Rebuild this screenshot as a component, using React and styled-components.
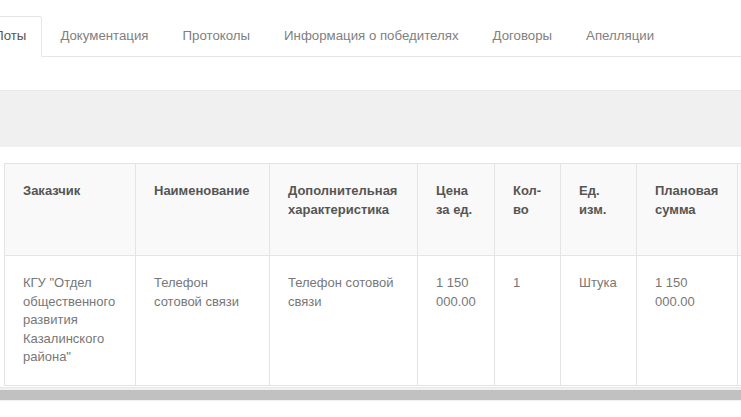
import React from "react";
import styled, { createGlobalStyle } from "styled-components";

const GlobalStyle = createGlobalStyle`
  html, body {
    margin: 0;
    padding: 0;
    background: #fff;
    overflow: hidden;
  }
  body {
    font-family: "Liberation Sans", Arial, sans-serif;
    font-size: 13px;
    line-height: 1.42857;
    color: #777;
  }
`;

const tabs = ["Лоты", "Документация", "Протоколы", "Информация о победителях", "Договоры", "Апелляции"];

const columns = [
  { title: "Заказчик", width: 131 },
  { title: "Наименование", width: 134 },
  { title: "Дополнительная характеристика", width: 148 },
  { title: "Цена за ед.", width: 77 },
  { title: "Кол-во", width: 66, lines: ["Кол-", "во"] },
  { title: "Ед. изм.", width: 76 },
  { title: "Плановая сумма", width: 101 },
  { title: "", width: 130 },
];

const row = [
  'КГУ "Отдел общественного развития Казалинского района"',
  "Телефон сотовой связи",
  "Телефон сотовой связи",
  "1 150 000.00",
  "1",
  "Штука",
  "1 150 000.00",
  "",
];

export default function App() {
  return (
    <Page>
      <GlobalStyle />
      <TabsBar>
        {tabs.map((tab, i) => (
          <Tab key={tab} $active={i === 0}>{tab}</Tab>
        ))}
      </TabsBar>
      <FilterPanel />
      <ScrollArea>
        <Table>
          <colgroup>
            {columns.map((c, i) => (
              <col key={i} style={{ width: c.width }} />
            ))}
          </colgroup>
          <thead>
            <HeadRow>
              {columns.map((c, i) => (
                <Th key={i}>
                  {c.lines ? c.lines.map((l) => <div key={l}>{l}</div>) : c.title}
                </Th>
              ))}
            </HeadRow>
          </thead>
          <tbody>
            <tr>
              {row.map((cell, i) => (
                <Td key={i}>{cell}</Td>
              ))}
            </tr>
          </tbody>
        </Table>
        <Scrollbar>
          <Thumb />
        </Scrollbar>
      </ScrollArea>
    </Page>
  );
}

const Page = styled.div`
  width: 741px;
  height: 417px;
  overflow: hidden;
  padding-top: 16px;
  box-sizing: border-box;
`;

const TabsBar = styled.ul`
  display: flex;
  list-style: none;
  margin: 0 0 0 -21px;
  padding: 0;
  border-bottom: 1px solid #e6e6e6;
  height: 40px;
`;

const Tab = styled.li`
  display: flex;
  align-items: center;
  padding: 0 15px;
  margin-right: 2px;
  margin-bottom: -1px;
  height: 41px;
  box-sizing: border-box;
  white-space: nowrap;
  font-size: 13.25px;
  color: ${(p) => (p.$active ? "#555" : "#808080")};
  background: ${(p) => (p.$active ? "#fff" : "transparent")};
  border: 1px solid ${(p) => (p.$active ? "#e6e6e6" : "transparent")};
  border-bottom-color: ${(p) => (p.$active ? "#fff" : "transparent")};
  border-radius: 3px 3px 0 0;
`;

const FilterPanel = styled.div`
  margin-top: 33px;
  height: 56px;
  background: #f0f0f0;
  border-top: 1px solid #e8e8e8;
`;

const ScrollArea = styled.div`
  margin-top: 16px;
  width: 741px;
  overflow: hidden;
`;

const Table = styled.table`
  margin-left: 4px;
  border-collapse: collapse;
  table-layout: fixed;
  width: 863px;
`;

const HeadRow = styled.tr`
  height: 92px;
`;

const Th = styled.th`
  background: #f9f9f9;
  border: 1px solid #e4e4e4;
  padding: 18px 18px;
  text-align: left;
  vertical-align: top;
  font-weight: bold;
  color: #555;
`;

const Td = styled.td`
  border: 1px solid #e4e4e4;
  padding: 18px 18px;
  vertical-align: top;
  color: #777;
  height: 93px;
`;

const Scrollbar = styled.div`
  margin-top: 1px;
  height: 13px;
  background: #f1f1f1;
  border-top: 1px solid #e8e8e8;
  display: flex;
  align-items: center;
`;

const Thumb = styled.div`
  flex: 1;
  height: 10px;
  background: #c1c1c1;
`;
